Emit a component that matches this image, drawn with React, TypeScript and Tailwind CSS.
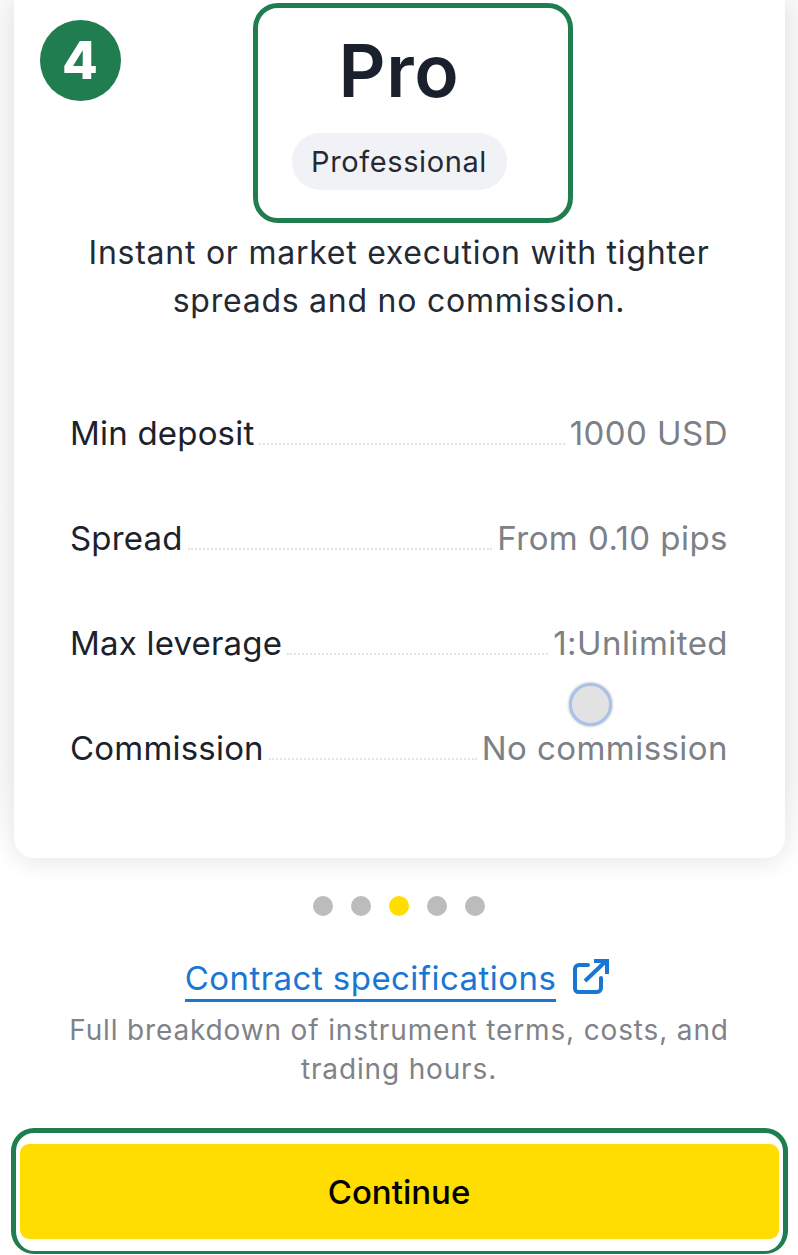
import React from "react";

const rows = [
  ["Min deposit", "1000 USD"],
  ["Spread", "From 0.10 pips"],
  ["Max leverage", "1:Unlimited"],
  ["Commission", "No commission"],
];

function ExternalIcon() {
  return (
    <svg width="38" height="38" viewBox="0 0 38 38" fill="none" className="block">
      <path d="M17 7H8a4 4 0 0 0-4 4v19.500a3.500 3.500 0 0 0 3.500 3.500H26a4 4 0 0 0 4-4V20" stroke="#1976d2" strokeWidth="4" strokeLinecap="round" />
      <path d="M14 23 34 4M23 3h13v13" stroke="#1976d2" strokeWidth="4" strokeLinecap="butt" />
    </svg>
  );
}

export default function App() {
  return (
    <div className="relative flex h-[1255px] w-[798px] flex-col items-center overflow-hidden bg-white font-['Inter',sans-serif]">
      <div className="absolute left-0 top-0 h-[860px] w-full bg-gradient-to-b from-[#f8f8f8] from-90% to-white" />
      <div className="relative flex h-[858px] w-[771px] shrink-0 flex-col items-center rounded-b-[20px] bg-white pt-[3px] shadow-[0_4px_24px_rgba(0,0,0,0.10)]">
        <div className="absolute left-[26px] top-[20px] flex h-[81px] w-[81px] items-center justify-center rounded-full bg-[#207d50] text-[52px] font-extrabold text-white">
          4
        </div>
        <div className="ml-[28px] flex h-[220px] w-[320px] flex-col items-start rounded-[25px] border-[5px] border-[#207d50] pt-[19px]">
          <div className="flex w-[282px] flex-col items-center">
            <div className="text-[73px] leading-[88px] font-semibold tracking-[0.7px] text-[#1a212c]">Pro</div>
            <div className="mt-[18px] flex h-[57px] w-[215px] items-center justify-center rounded-[28px] bg-[#f1f2f6] pt-[1px] text-[29px] tracking-[0.6px] text-[#242a33]">
              Professional
            </div>
          </div>
        </div>
        <p className="mt-[6px] w-[660px] text-center text-[32px] leading-[48px] tracking-[0.75px] text-[#242a33]">
          Instant or market execution with tighter spreads and no commission.
        </p>
        <div className="ml-[1px] mt-[88px] flex w-[657px] flex-col gap-[65px]">
          {rows.map(([label, value]) => (
            <div key={label} className="flex h-[40px] items-center">
              <span className="-ml-[1px] text-[33px] leading-[40px] tracking-[0.2px] text-[#1c222c]">{label}</span>
              <span className="mx-[5px] mt-[21px] h-0 flex-1 border-b-2 border-dotted border-[#e2e3e5]" />
              <span className="text-[33px] leading-[40px] tracking-[0.45px] text-[#7c8087]">{value}</span>
            </div>
          ))}
        </div>
        <div className="absolute left-[555px] top-[683px] h-[43px] w-[43px] rounded-full border-[3px] border-[#a9c3e8] bg-[#e2e2e2] shadow-[0_0_3px_rgba(0,0,0,0.35)]" />
      </div>
      <div className="relative mt-[38px] flex gap-[18px]">
        {[0, 1, 2, 3, 4].map((i) => (
          <span key={i} className={i === 2 ? "h-[20px] w-[20px] rounded-full bg-[#ffdd00]" : "h-[20px] w-[20px] rounded-full bg-[#bcbcbc]"} />
        ))}
      </div>
      <div className="relative mt-[41px] flex items-start gap-[15px] pr-[4px]">
        <span className="border-b-[3px] border-[#1976d2] text-[33px] leading-[42px] tracking-[0.45px] text-[#1976d2]">Contract specifications</span>
        <span className="mt-[1px]"><ExternalIcon /></span>
      </div>
      <p className="relative mt-[9px] w-[690px] text-center text-[28px] leading-[38.5px] tracking-[0.85px] text-[#808287]">
        Full breakdown of instrument terms, costs, and trading hours.
      </p>
      <div className="relative mt-[40px] flex h-[126px] w-[777px] shrink-0 items-center justify-center rounded-[23px] border-[5px] border-b-[3px] border-[#207d50]">
        <button className="mb-[2px] h-[95px] w-[759px] rounded-[9px] bg-[#ffdd00] pt-[3px] text-[33px] font-medium text-black">Continue</button>
      </div>
    </div>
  );
}
